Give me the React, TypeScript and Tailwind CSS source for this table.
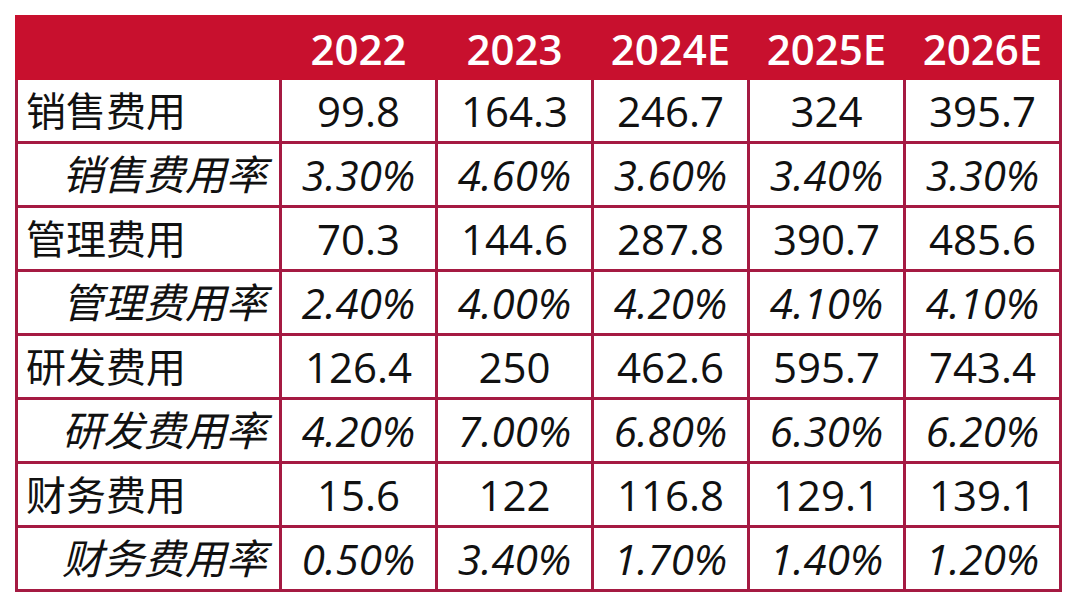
const years = ["2022", "2023", "2024E", "2025E", "2026E"];

const rows = [
  { label: "销售费用", values: ["99.8", "164.3", "246.7", "324", "395.7"] },
  { label: "销售费用率", values: ["3.30%", "4.60%", "3.60%", "3.40%", "3.30%"], rate: true },
  { label: "管理费用", values: ["70.3", "144.6", "287.8", "390.7", "485.6"] },
  { label: "管理费用率", values: ["2.40%", "4.00%", "4.20%", "4.10%", "4.10%"], rate: true },
  { label: "研发费用", values: ["126.4", "250", "462.6", "595.7", "743.4"] },
  { label: "研发费用率", values: ["4.20%", "7.00%", "6.80%", "6.30%", "6.20%"], rate: true },
  { label: "财务费用", values: ["15.6", "122", "116.8", "129.1", "139.1"] },
  { label: "财务费用率", values: ["0.50%", "3.40%", "1.70%", "1.40%", "1.20%"], rate: true },
];

const font = "font-['Open_Sans','Noto_Sans_CJK_SC',sans-serif]";

export default function App() {
  return (
    <div className={`w-[1078px] h-[608px] bg-white pt-[15px] pl-[15px] ${font}`}>
      <div className="w-[1047px]">
        <div className="grid h-[65px] grid-cols-[261px_repeat(5,153px)] gap-x-[3px] bg-[#c8102e] px-[3px] text-[42px] font-semibold text-white">
          <div />
          {years.map((y) => (
            <div key={y} className="flex items-center justify-center pt-[2px]">
              {y}
            </div>
          ))}
        </div>
        <div className="grid grid-cols-[261px_repeat(5,153px)] auto-rows-[61px] gap-[3px] bg-[#a51a42] px-[3px] pb-[3px] text-[#111]">
          {rows.map((r) => (
            <>
              <div
                key={r.label}
                className={
                  r.rate
                    ? "flex items-center justify-end bg-white pr-[12px] text-[41px] italic"
                    : "flex items-center bg-white pl-[8px] text-[40px]"
                }
              >
                {r.label}
              </div>
              {r.values.map((v, i) => (
                <div
                  key={r.label + i}
                  className={`flex items-center justify-center bg-white text-[42px] ${r.rate ? "italic" : ""}`}
                >
                  {v}
                </div>
              ))}
            </>
          ))}
        </div>
      </div>
    </div>
  );
}
